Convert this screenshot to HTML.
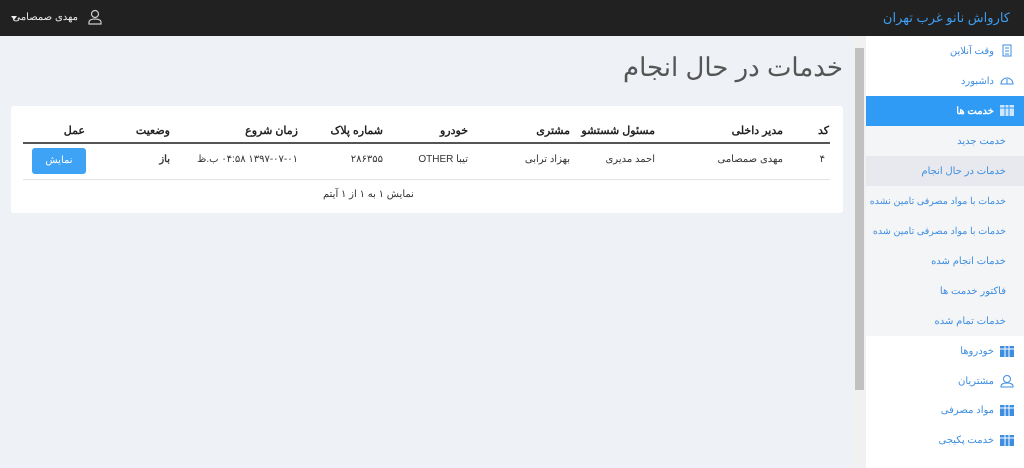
<!DOCTYPE html>
<html><head><meta charset="utf-8"><style>
*{margin:0;padding:0;box-sizing:border-box}
body{width:1024px;height:468px;overflow:hidden;background:#eef1f5;font-family:"Liberation Sans","Noto Sans CJK SC",sans-serif;position:relative}
.top{position:absolute;left:0;top:0;width:1024px;height:36px;background:#212121}
.a{position:absolute;white-space:nowrap}
.side{position:absolute;left:866px;top:36px;width:158px;height:432px;background:#fff}
.sub{position:absolute;left:0;top:90px;width:158px;height:210px;background:#f4f5f7}
.si{position:absolute;right:18px;font-size:10px;color:#3d8de0;direction:rtl;white-space:nowrap}
.ic{position:absolute;right:10px;width:14px;height:11px}
.card{position:absolute;left:11px;top:106px;width:832px;height:107px;background:#fff;border-radius:3px}
.th{position:absolute;top:18px;font-size:11px;font-weight:bold;color:#222;direction:rtl;white-space:nowrap}
.td{position:absolute;top:48px;font-size:10px;color:#333;direction:rtl;white-space:nowrap}
</style></head><body>
<div class="top">
<div class="a" style="right:14px;top:10px;font-size:13px;color:#3d9cf0;direction:rtl">کارواش نانو غرب تهران</div>
<svg class="a" style="left:88px;top:9px" width="14" height="16" viewBox="0 0 14 16" fill="none" stroke="#ccc" stroke-width="1.2"><circle cx="7" cy="5" r="3.5"/><path d="M1 15h12v-2c0-2-3-3-6-3s-6 1-6 3z"/></svg>
<div class="a" style="right:946px;top:12px;font-size:10px;color:#eee;direction:rtl">مهدی صمصامی</div>
<div class="a" style="left:11px;top:16px;width:0;height:0;border-left:3px solid transparent;border-right:3px solid transparent;border-top:4px solid #eee"></div>
</div>
<div class="a" style="left:852px;top:36px;width:14px;height:432px;background:#f1f1f1"></div>
<div class="a" style="left:855px;top:48px;width:9px;height:342px;background:#c1c1c1"></div>
<div class="side">
<div class="sub"></div>
<div class="a" style="left:0;top:60px;width:158px;height:30px;background:#2f9bf5"></div>
<div class="a" style="left:0;top:120px;width:158px;height:30px;background:#e7e9ee"></div>
<svg class="ic" style="top:7px;height:14px" viewBox="0 0 14 14" width="14" height="14" fill="none" stroke="#3d8de0"><rect x="3" y="2" width="8" height="11"/><path d="M5 5h4M5 8h4M5 11h4"/></svg>
<div class="si" style="top:10px;right:30px">وقت آنلاین</div>
<svg class="ic" style="top:37px;height:14px" viewBox="0 0 14 14" width="14" height="14" fill="none" stroke="#3d8de0"><path d="M1 11a6 6 0 1 1 12 0z"/><path d="M7 11V6"/></svg>
<div class="si" style="top:40px;right:30px">داشبورد</div>
<svg class="ic" style="top:69px" viewBox="0 0 14 11" width="14" height="11"><rect width="14" height="11" fill="#cfe6fd"/><path d="M0 3h14M5 0v11M9 0v11" stroke="#2f9bf5"/></svg>
<div class="si" style="top:70px;right:30px;color:#fff;font-weight:bold">خدمت ها</div>
<div class="si" style="top:100px">خدمت جدید</div>
<div class="si" style="top:130px">خدمات در حال انجام</div>
<div class="si" style="top:160px;font-size:9.5px;letter-spacing:-0.3px">خدمات با مواد مصرفی تامین نشده</div>
<div class="si" style="top:190px;font-size:9.5px;letter-spacing:-0.3px">خدمات با مواد مصرفی تامین شده</div>
<div class="si" style="top:220px">خدمات انجام شده</div>
<div class="si" style="top:250px">فاکتور خدمت ها</div>
<div class="si" style="top:280px">خدمات تمام شده</div>
<svg class="ic" style="top:310px" viewBox="0 0 14 11" width="14" height="11"><rect width="14" height="11" fill="#3d8de0"/><path d="M0 3h14M5 0v11M9 0v11" stroke="#fff"/></svg>
<div class="si" style="top:310px;right:30px">خودروها</div>
<svg class="ic" style="top:338px;height:14px" viewBox="0 0 14 14" width="14" height="14" fill="none" stroke="#3d8de0"><circle cx="7" cy="5" r="3.5"/><path d="M1 13h12v-1c0-2-3-3-6-3s-6 1-6 3z"/></svg>
<div class="si" style="top:340px;right:30px">مشتریان</div>
<svg class="ic" style="top:369px" viewBox="0 0 14 11" width="14" height="11"><rect width="14" height="11" fill="#3d8de0"/><path d="M0 3h14M5 0v11M9 0v11" stroke="#fff"/></svg>
<div class="si" style="top:369px;right:30px">مواد مصرفی</div>
<svg class="ic" style="top:399px" viewBox="0 0 14 11" width="14" height="11"><rect width="14" height="11" fill="#3d8de0"/><path d="M0 3h14M5 0v11M9 0v11" stroke="#fff"/></svg>
<div class="si" style="top:399px;right:30px">خدمت پکیجی</div>
</div>
<div class="a" style="right:181px;top:52px;font-size:26px;color:#555;direction:rtl">خدمات در حال انجام</div>
<div class="card">
<div class="th" style="right:14px">کد</div>
<div class="th" style="right:60px">مدیر داخلی</div>
<div class="th" style="right:188px">مسئول شستشو</div>
<div class="th" style="right:273px">مشتری</div>
<div class="th" style="right:375px">خودرو</div>
<div class="th" style="right:460px">شماره پلاک</div>
<div class="th" style="right:545px">زمان شروع</div>
<div class="th" style="right:673px">وضعیت</div>
<div class="th" style="right:758px">عمل</div>
<div class="a" style="left:12px;top:36px;width:807px;height:2px;background:#555"></div>
<div class="td" style="right:18px">۴</div>
<div class="td" style="right:60px">مهدی صمصامی</div>
<div class="td" style="right:188px">احمد مدیری</div>
<div class="td" style="right:273px">بهزاد ترابی</div>
<div class="td" style="right:375px">تیبا OTHER</div>
<div class="td" style="right:460px">۲۸۶۳۵۵</div>
<div class="td" style="right:545px">۱۳۹۷-۰۷-۰۱ ۰۴:۵۸ ب.ظ</div>
<div class="td" style="right:673px;font-weight:bold">باز</div>
<div class="a" style="left:21px;top:42px;width:54px;height:26px;background:#3ea2f5;border-radius:3px;color:#fff;font-size:10px;text-align:center;line-height:26px">نمایش</div>
<div class="a" style="left:12px;top:73px;width:807px;height:1px;background:#e3e3e3"></div>
<div class="a" style="left:312px;top:83px;font-size:10px;color:#333;direction:rtl">نمایش ۱ به ۱ از ۱ آیتم</div>
</div>
</body></html>
